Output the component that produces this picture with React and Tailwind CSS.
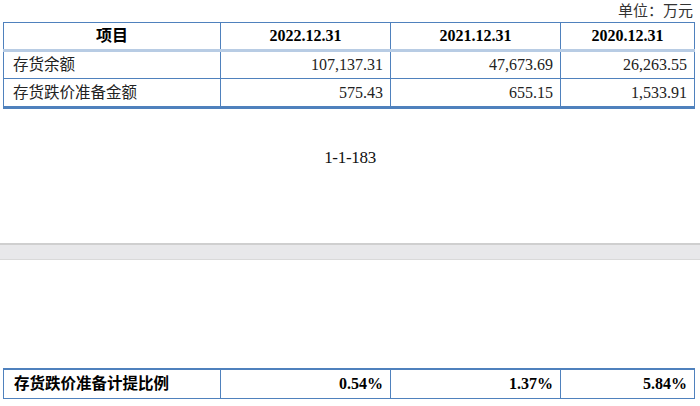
const rows = [
  { name: "存货余额", v: ["107,137.31", "47,673.69", "26,263.55"] },
  { name: "存货跌价准备金额", v: ["575.43", "655.15", "1,533.91"] },
];

const cols = ["2022.12.31", "2021.12.31", "2020.12.31"];

export default function App() {
  return (
    <div
      className="w-[700px] h-[406px] bg-white text-black flex flex-col overflow-hidden font-['Liberation_Serif','Noto_Sans_CJK_SC',serif]"
    >
      <div className="h-[22px] flex justify-end items-center pr-[7px] text-[15px] text-[#333]">
        单位：万元
      </div>

      <table className="ml-[3px] w-[691px] border-collapse table-fixed text-[16px]">
        <colgroup>
          <col className="w-[217px]" />
          <col className="w-[170px]" />
          <col className="w-[170px]" />
          <col className="w-[134px]" />
        </colgroup>
        <thead>
          <tr className="h-[28px] border-b-[3px] border-b-[#b8cce4]">
            <th className="border border-[#4f81bd] border-b-[#b8cce4] font-bold text-center">项目</th>
            {cols.map((c) => (
              <th key={c} className="border border-[#4f81bd] border-b-[#b8cce4] font-bold text-center">
                {c}
              </th>
            ))}
          </tr>
        </thead>
        <tbody>
          {rows.map((r, i) => (
            <tr key={r.name} className={i === rows.length - 1 ? "h-[29px] border-b-[3px] border-b-[#4f81bd]" : "h-[28px]"}>
              <td className="border border-[#4f81bd] pl-[9px] text-left text-[15.5px] text-[#222]">{r.name}</td>
              {r.v.map((v, j) => (
                <td key={j} className="border border-[#4f81bd] pr-[7px] text-right text-[#222]">
                  {v}
                </td>
              ))}
            </tr>
          ))}
        </tbody>
      </table>

      <div className="h-[38px]" />
      <div className="h-[22px] flex justify-center items-center text-[17px] tracking-[-0.3px] text-[#111]">
        1-1-183
      </div>

      <div className="h-[74px]" />
      <div className="h-[17px] border-t-2 border-t-[#cfcfcf] border-b border-b-[#d9d9d9] bg-[#e8e8ea]" />

      <div className="h-[108px]" />
      <table className="ml-[3px] w-[691px] border-collapse table-fixed text-[16px]">
        <colgroup>
          <col className="w-[217px]" />
          <col className="w-[170px]" />
          <col className="w-[170px]" />
          <col className="w-[134px]" />
        </colgroup>
        <tbody>
          <tr className="h-[29px] border-t-2 border-t-[#4f81bd]">
            <td className="border border-[#4f81bd] pl-[10px] font-bold text-left text-[15.5px]">存货跌价准备计提比例</td>
            <td className="border border-[#4f81bd] pr-[7px] font-bold text-right">0.54%</td>
            <td className="border border-[#4f81bd] pr-[7px] font-bold text-right">1.37%</td>
            <td className="border border-[#4f81bd] pr-[7px] font-bold text-right">5.84%</td>
          </tr>
        </tbody>
      </table>
    </div>
  );
}
